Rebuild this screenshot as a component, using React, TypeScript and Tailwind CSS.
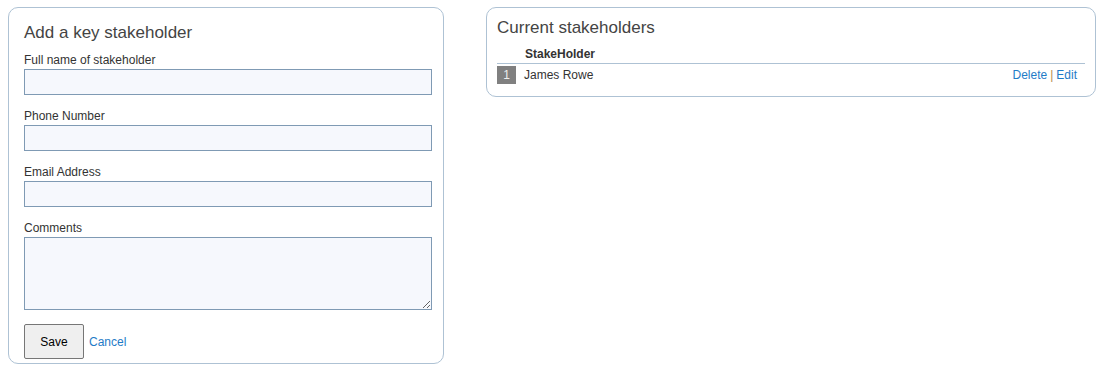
const fields = [
  { label: "Full name of stakeholder", id: "name" },
  { label: "Phone Number", id: "phone" },
  { label: "Email Address", id: "email" },
];

const stakeholders = [{ name: "James Rowe" }];

export default function App() {
  return (
    <div className="min-h-[375px] bg-white pl-[8px] pt-[7px] font-['Liberation_Sans',Arial,sans-serif] text-[12px] text-[#333]">
      <div className="flex items-start gap-[43px]">
        {/* Add form */}
        <div className="w-[436px] rounded-[10px] border border-[#aec2d4] px-[15px] pt-[15px] pb-[4px]">
          <h2 className="text-[17px] leading-[20px] font-normal text-[#444]">Add a key stakeholder</h2>
          <div className="mt-[9px] flex flex-col gap-[13px]">
            {fields.map((f) => (
              <div key={f.id}>
                <label htmlFor={f.id} className="block pt-[1px] leading-[14px]">{f.label}</label>
                <input
                  id={f.id}
                  type="text"
                  className="mt-[2px] block h-[26px] w-[408px] border border-[#7f9ab4] bg-[#f6f8fd] px-1 outline-none"
                />
              </div>
            ))}
            <div>
              <label htmlFor="comments" className="block pt-[1px] leading-[14px]">Comments</label>
              <textarea
                id="comments"
                className="mt-[2px] block h-[73px] w-[408px] resize border border-[#7f9ab4] bg-[#f6f8fd] px-1 outline-none"
              />
            </div>
          </div>
          <div className="mt-[14px] flex items-center gap-[5px]">
            <button className="h-[35px] w-[60px] rounded-[2px] border border-[#767676] bg-[#efefef] text-[12px] text-black">
              Save
            </button>
            <a href="#" className="text-[#1f7cc7]">Cancel</a>
          </div>
        </div>

        {/* Current list */}
        <div className="-ml-px w-[610px] rounded-[10px] border border-[#aec2d4] px-[10px] pt-[10px] pb-[12px]">
          <h2 className="text-[17px] leading-[20px] font-normal text-[#444]">Current stakeholders</h2>
          <div className="mt-[9px] border-b border-[#aec2d4] pb-[2px] pl-[28px] font-bold leading-[14px] text-[#333]">
            StakeHolder
          </div>
          {stakeholders.map((s, i) => (
            <div key={s.name} className="mt-[2px] flex items-center pr-[8px]">
              <span className="flex h-[18px] w-[19px] items-center justify-center bg-[#808080] text-[#eee]">{i + 1}</span>
              <span className="ml-[8px] flex-1">{s.name}</span>
              <a href="#" className="text-[#1f7cc7]">Delete</a>
              <span className="mx-[3px] text-[#b38b4d]">|</span>
              <a href="#" className="text-[#1f7cc7]">Edit</a>
            </div>
          ))}
        </div>
      </div>
    </div>
  );
}
